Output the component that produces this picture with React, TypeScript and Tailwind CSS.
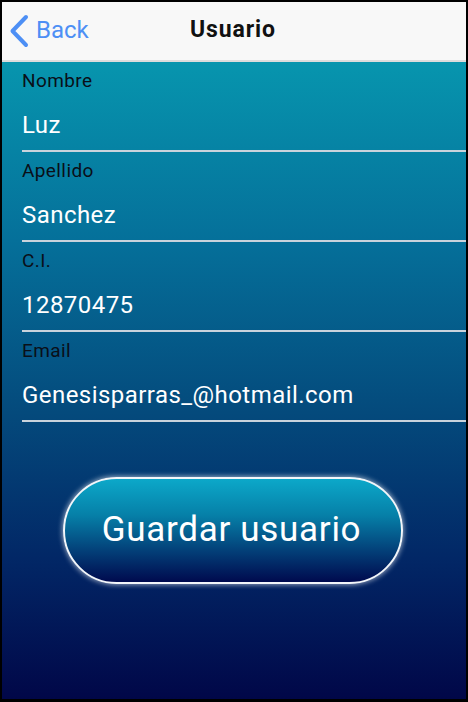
import React from "react";

const fields = [
  { label: "Nombre", value: "Luz" },
  { label: "Apellido", value: "Sanchez" },
  { label: "C.I.", value: "12870475" },
  { label: "Email", value: "Genesisparras_@hotmail.com" },
];

export default function App() {
  return (
    <div
      className="w-[468px] h-[702px] bg-black pt-[2px] pl-[2px] pr-[2px] pb-[3px]"
      style={{ fontFamily: "Roboto, 'Noto Sans', sans-serif" }}
    >
      <div className="w-full h-full flex flex-col overflow-hidden">
        <div className="h-[60px] shrink-0 bg-[#f8f8f8] border-b-2 border-[#dcdcdc] relative flex items-center">
          <div className="flex items-center pl-[5px] text-[#4d8ff5]">
            <svg width="24" height="34" viewBox="0 0 24 34" className="mt-[-1px]">
              <path d="M19 3 L5.5 17 L19 31" fill="none" stroke="#4d8ff5" strokeWidth="4" strokeLinecap="round" strokeLinejoin="round" />
            </svg>
            <span className="text-[24px] leading-none ml-[5px] mt-[-2px]">Back</span>
          </div>
          <div className="absolute left-0 right-0 top-0 bottom-0 flex items-center justify-center pointer-events-none">
            <span className="text-[23px] font-bold text-[#111] ml-[-2px] mt-[-2px] tracking-[0.9px]">Usuario</span>
          </div>
        </div>
        <div className="flex-1 bg-[linear-gradient(to_bottom,#0795ae_0%,#05709a_28%,#044a7c_55%,#022766_78%,#010748_100%)]">
          {fields.map((f) => (
            <div key={f.label} className="pl-[20px] flex flex-col">
              <div className="h-[88px] flex flex-col">
                <div className="mt-[8px] h-[22px] leading-[22px] text-[19px] tracking-[0.4px] text-[#0a0f18]">{f.label}</div>
                <div className="mt-[18px] h-[30px] leading-[30px] text-[24px] tracking-[0.45px] text-white">{f.value}</div>
              </div>
              <div className="h-[2px] bg-[#c9d3dc]" />
            </div>
          ))}
          <div className="mt-[55px] ml-[61px] w-[340px] h-[107px] rounded-full border-2 border-[#f2f6fa] shadow-[0_0_5px_1px_rgba(255,255,255,0.55)] bg-[linear-gradient(to_bottom,#0ca8c9_0%,#0680a8_35%,#033f78_70%,#000a4e_100%)] flex items-center justify-center">
            <span className="text-[35px] tracking-[0.7px] text-white mt-[-1px] ml-[-3px]">Guardar usuario</span>
          </div>
        </div>
      </div>
    </div>
  );
}
